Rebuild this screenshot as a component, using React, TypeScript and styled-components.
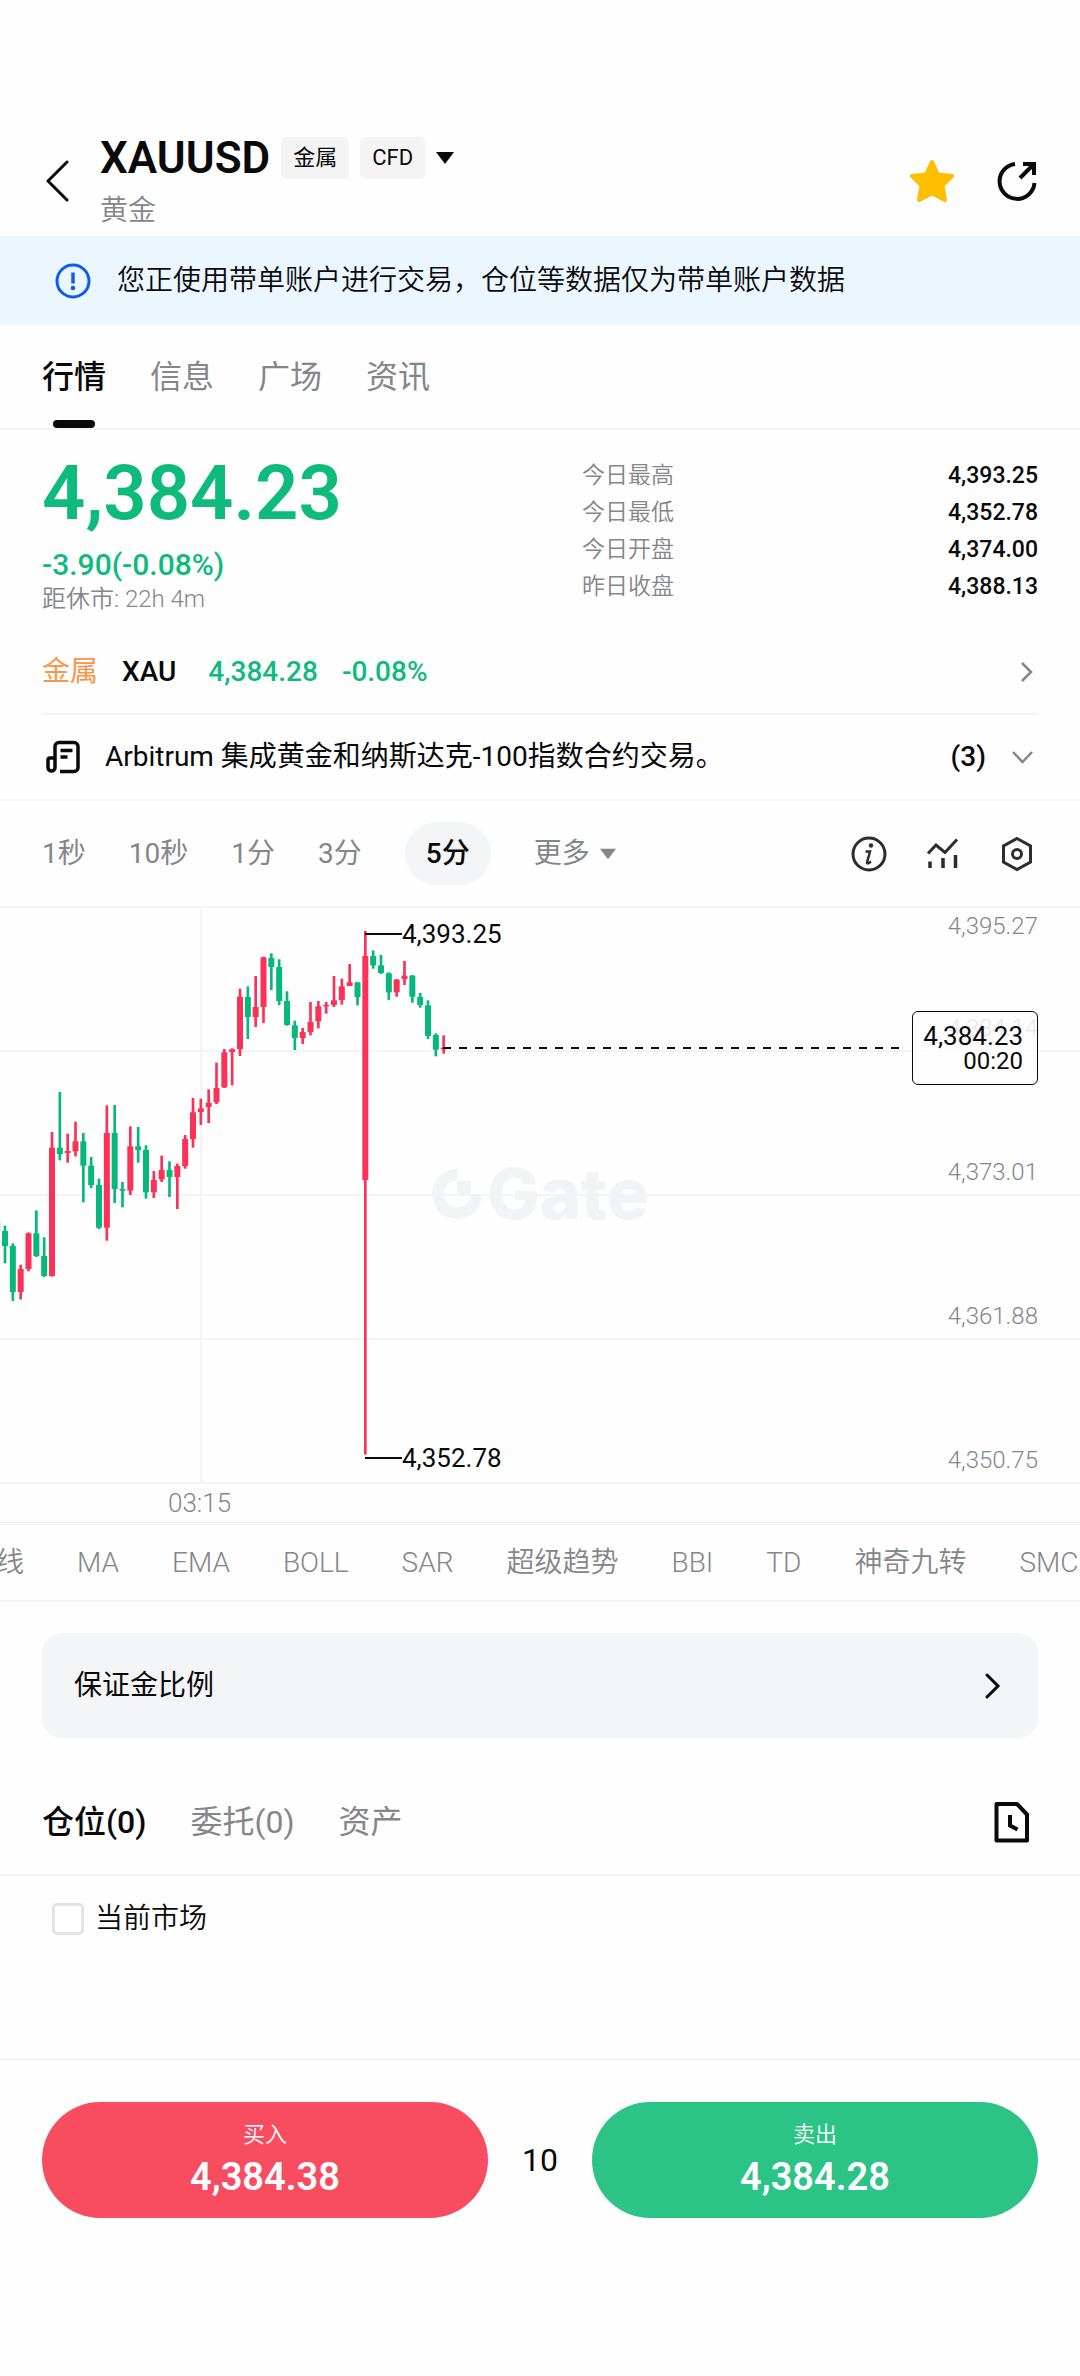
import React, { useState } from "react";
import styled, { createGlobalStyle } from "styled-components";

const color = {
  text: "#0a0a0b",
  muted: "#84868a",
  line: "#f3f4f5",
  fill: "#f4f5f7",
  up: "#0ebb7c",
  candleUp: "#fc3158",
  candleDown: "#06b87c",
};

const GlobalStyle = createGlobalStyle`
  * { box-sizing: border-box; }
  body {
    margin: 0;
    background: #fefefe;
    color: ${color.text};
    font-family: Roboto, "Noto Sans CJK SC", sans-serif;
    font-size: 28px;
    font-weight: 350;
    line-height: 40px;
  }
  button, input { font: inherit; color: inherit; }
  button {
    padding: 0;
    border: 0;
    background: none;
    cursor: pointer;
    white-space: nowrap;
  }
  svg { display: block; flex: none; }
`;

const Page = styled.div`
  display: flex;
  flex-direction: column;
  min-height: 100vh;
  overflow-x: hidden;
`;

/* ---------- header ---------- */

const Header = styled.header`
  display: flex;
  align-items: center;
  padding: 132px 42px 6px;
`;

const BackButton = styled.button`
  width: 58px;
`;

const Titles = styled.div`
  display: flex;
  flex: 1;
  flex-direction: column;
  gap: 8px;
`;

const TitleRow = styled.div`
  display: flex;
  align-items: center;
  gap: 11px;
  height: 52px;
`;

const Symbol = styled.h1`
  margin: 0;
  font-size: 44px;
  font-weight: 600;
  line-height: 52px;
`;

const Tag = styled.span`
  padding: 0 12px;
  border-radius: 5px;
  background: #f4f4f4;
  font-size: 22px;
  font-weight: 400;
  line-height: 42px;
`;

const Subtitle = styled.p`
  margin: 0;
  color: ${color.muted};
  line-height: 38px;
`;

const HeaderActions = styled.div`
  display: flex;
  gap: 42px;
`;

const Banner = styled.div`
  display: flex;
  align-items: center;
  gap: 23px;
  min-height: 89px;
  padding: 0 52px;
  background: #ecf6ff;
`;

/* ---------- tabs ---------- */

const TabBar = styled.nav<{ $height: number }>`
  display: flex;
  align-items: stretch;
  gap: 44px;
  height: ${(p) => p.$height}px;
  padding: 0 42px;
  border-bottom: 2px solid ${color.line};
`;

const Tab = styled.button<{ $active: boolean; $marked?: boolean }>`
  position: relative;
  color: ${(p) => (p.$active ? color.text : color.muted)};
  font-size: 32px;
  font-weight: ${(p) => (p.$active ? 500 : 400)};

  &::after {
    content: "";
    display: ${(p) => (p.$active && p.$marked ? "block" : "none")};
    position: absolute;
    bottom: 0;
    left: 50%;
    width: 42px;
    height: 8px;
    margin-left: -21px;
    border-radius: 4px;
    background: ${color.text};
  }
`;

const TabEnd = styled.div`
  display: flex;
  flex: 1;
  align-items: center;
  justify-content: flex-end;
`;

/* ---------- quote ---------- */

const Quote = styled.section`
  display: grid;
  grid-template-columns: 1fr 1fr;
  gap: 84px;
  padding: 27px 42px 18px;
`;

const Price = styled.div`
  color: ${color.up};
  font-size: 76px;
  font-weight: 600;
  line-height: 72px;
`;

const Change = styled.div`
  margin-top: 16px;
  color: ${color.up};
  font-size: 30px;
  font-weight: 500;
`;

const Countdown = styled.div`
  color: ${color.muted};
  font-size: 24px;
  line-height: 28px;
`;

const Stats = styled.dl`
  margin: 0;
`;

const Stat = styled.div`
  display: flex;
  justify-content: space-between;
  font-size: 23px;
  line-height: 37px;

  dt { color: ${color.muted}; }
  dd { margin: 0; font-weight: 500; }
`;

const Related = styled.a`
  display: flex;
  align-items: center;
  gap: 24px;
  height: 84px;
  margin: 0 42px;
  border-bottom: 2px solid ${color.line};
  color: ${color.text};
  text-decoration: none;
  font-weight: 500;
`;

const Category = styled.span`
  color: #f8964a;
  font-weight: 400;
`;

const RelatedQuote = styled.span`
  display: flex;
  flex: 1;
  gap: 24px;
  margin-left: 8px;
  color: ${color.up};
`;

const News = styled.button`
  display: flex;
  align-items: center;
  height: 86px;
  padding: 0 42px;
  border-bottom: 2px solid ${color.line};
  text-align: left;
`;

const NewsTitle = styled.span`
  flex: 1;
  overflow: hidden;
  margin-left: 21px;
  font-weight: 400;
  text-overflow: ellipsis;
`;

const NewsCount = styled.span`
  margin-right: 22px;
  font-weight: 500;
`;

/* ---------- chart ---------- */

const Intervals = styled.div`
  display: flex;
  align-items: center;
  gap: 43px;
  height: 105px;
  padding: 0 42px;
`;

const Interval = styled.button<{ $active?: boolean }>`
  display: flex;
  align-items: center;
  gap: 10px;
  height: 63px;
  padding: ${(p) => (p.$active ? "0 21px" : "0")};
  border-radius: 32px;
  background: ${(p) => (p.$active ? color.fill : "none")};
  color: ${(p) => (p.$active ? color.text : color.muted)};
  font-weight: ${(p) => (p.$active ? 500 : 400)};
`;

const ChartTools = styled.div`
  display: flex;
  flex: 1;
  justify-content: flex-end;
  gap: 32px;
`;

const Chart = styled.section`
  position: relative;
  height: 576px;
  overflow: hidden;
`;

const Band = styled.div`
  display: flex;
  flex-direction: column;
  justify-content: space-between;
  height: 144px;
  padding: 0 42px 4px;
  border-top: 2px solid ${color.line};
  color: ${color.muted};
  font-size: 24px;
  line-height: 36px;
  text-align: right;
`;

const TimeLine = styled.div`
  position: absolute;
  top: 0;
  left: 200px;
  width: 2px;
  height: 100%;
  background: ${color.line};
`;

const Watermark = styled.div`
  position: absolute;
  inset: 0;
  display: flex;
  align-items: center;
  justify-content: center;
  gap: 4px;
  color: #f2f3f4;
  font-family: Inter, sans-serif;
  font-size: 70px;
  font-weight: 800;
`;

const Plot = styled.svg`
  position: absolute;
  top: 0;
  left: 0;
`;

const Extreme = styled.div<{ $top: number }>`
  position: absolute;
  top: ${(p) => p.$top}px;
  left: 365px;
  display: flex;
  align-items: center;
  font-size: 26px;
  font-weight: 400;
  line-height: 32px;

  &::before {
    content: "";
    width: 37px;
    height: 2px;
    background: ${color.text};
  }
`;

const LastPrice = styled.div`
  position: absolute;
  top: 105px;
  right: 42px;
  left: 443px;
  display: flex;
  align-items: center;
  gap: 6px;
`;

const Dashes = styled.div`
  flex: 1;
  height: 2px;
  background: repeating-linear-gradient(to right, ${color.text} 0 8px, transparent 8px 16px);
`;

const PriceBox = styled.div`
  display: flex;
  flex-direction: column;
  justify-content: center;
  width: 126px;
  height: 74px;
  padding-right: 14px;
  border: 1px solid ${color.text};
  border-radius: 6px;
  background: rgba(254, 254, 254, 0.8);
  font-size: 26px;
  font-weight: 400;
  line-height: 26px;
  text-align: right;

  small { font-size: 24px; line-height: 24px; }
`;

const TimeAxis = styled.div`
  display: flex;
  height: 43px;
  padding-left: 168px;
  border-top: 2px solid ${color.line};
  border-bottom: 3px double #eceeef;
  color: ${color.muted};
  font-size: 26px;
  line-height: 38px;
`;

const Indicators = styled.div`
  display: flex;
  align-items: center;
  gap: 53px;
  height: 77px;
  overflow: hidden;
  border-bottom: 2px solid ${color.line};
  color: ${color.muted};

  button:first-child { margin-left: -4px; }
`;

/* ---------- account ---------- */

const MarginCard = styled.button`
  display: flex;
  align-items: center;
  justify-content: space-between;
  height: 105px;
  margin: 31px 42px;
  padding: 0 32px;
  border-radius: 20px;
  background: ${color.fill};
  font-weight: 400;
`;

const Positions = styled.section`
  flex: 1;
  padding: 23px 52px;
`;

const MarketFilter = styled.label`
  display: inline-flex;
  align-items: center;
  gap: 11px;

  input {
    width: 32px;
    height: 32px;
    margin: 0;
    border: 3px solid #e4e4e4;
    border-radius: 5px;
    background: #fff;
    appearance: none;
  }
  input:checked { background: ${color.text}; }
`;

const TradeBar = styled.footer`
  display: flex;
  align-items: center;
  padding: 42px 42px 158px;
  border-top: 1px solid #eceeef;
`;

const TradeButton = styled.button<{ $tone: string }>`
  flex: 1;
  height: 116px;
  border-radius: 58px;
  background: ${(p) => p.$tone};
  color: #fff;
`;

const TradeLabel = styled.span`
  display: block;
  font-size: 22px;
  line-height: 34px;
`;

const TradePrice = styled.strong`
  display: block;
  font-size: 38px;
  font-weight: 600;
  line-height: 50px;
`;

const Lots = styled.input`
  width: 104px;
  padding: 0;
  border: 0;
  background: none;
  font-size: 32px;
  font-weight: 400;
  text-align: center;
`;

/* ---------- data ---------- */

const stats = [
  ["今日最高", "4,393.25"],
  ["今日最低", "4,352.78"],
  ["今日开盘", "4,374.00"],
  ["昨日收盘", "4,388.13"],
];

const bands = [
  ["4,395.27", "4,384.14"],
  ["", "4,373.01"],
  ["", "4,361.88"],
  ["", "4,350.75"],
];

const indicators = ["线", "MA", "EMA", "BOLL", "SAR", "超级趋势", "BBI", "TD", "神奇九转", "SMC"];

type Candle = ["r" | "g", number, number, number, number];

// direction, high, body top, body bottom, low
const candles: Candle[] = [
  ["g", 963, 963, 992, 992],
  ["g", 977, 993, 1038, 1090], ["g", 1030, 1038, 1176, 1203], ["r", 1094, 1107, 1176, 1198],
  ["r", 997, 1000, 1107, 1114], ["g", 931, 1000, 1068, 1071], ["g", 1012, 1068, 1128, 1131],
  ["r", 696, 743, 1128, 1130], ["g", 576, 743, 762, 781], ["r", 701, 753, 759, 788],
  ["r", 665, 724, 754, 769], ["g", 699, 724, 797, 907], ["g", 771, 797, 855, 864],
  ["g", 836, 855, 983, 987], ["r", 616, 699, 983, 1022], ["g", 615, 699, 867, 909],
  ["g", 846, 867, 872, 922], ["r", 679, 739, 872, 885], ["g", 681, 739, 750, 788],
  ["g", 736, 750, 877, 896], ["r", 813, 840, 877, 894], ["r", 767, 810, 838, 846],
  ["g", 784, 810, 831, 891], ["r", 791, 798, 831, 927], ["r", 705, 717, 798, 806],
  ["r", 594, 637, 717, 743], ["r", 596, 625, 636, 675], ["r", 568, 608, 621, 669],
  ["r", 488, 564, 607, 612], ["r", 447, 457, 562, 564], ["r", 445, 448, 456, 556],
  ["r", 266, 290, 447, 468], ["g", 259, 291, 351, 417], ["r", 228, 321, 351, 381],
  ["r", 170, 172, 321, 369], ["g", 160, 174, 201, 270], ["g", 178, 201, 303, 315],
  ["g", 274, 303, 375, 377], ["g", 362, 376, 414, 450], ["r", 384, 396, 414, 432],
  ["r", 306, 366, 396, 406], ["r", 303, 319, 364, 385], ["r", 306, 315, 319, 341],
  ["r", 228, 301, 315, 321], ["r", 236, 259, 300, 314], ["r", 192, 247, 258, 258],
  ["g", 246, 247, 291, 316], ["r", 93, 168, 840, 1664], ["g", 151, 168, 196, 206],
  ["g", 165, 196, 219, 222], ["g", 217, 220, 277, 300], ["r", 237, 239, 277, 290],
  ["r", 183, 227, 237, 255], ["g", 225, 227, 290, 308], ["g", 279, 291, 315, 323],
  ["g", 301, 316, 408, 417], ["g", 400, 405, 449, 469], ["r", 406, 443, 448, 461],
];

/* ---------- icons ---------- */

const Icon = ({ size = 42, children, ...rest }: React.SVGProps<SVGSVGElement> & { size?: number }) => (
  <svg width={size} height={size} viewBox={`0 0 ${size} ${size}`} fill="none" stroke="currentColor" aria-hidden="true" {...rest}>
    {children}
  </svg>
);

const BackIcon = () => (
  <Icon strokeWidth="3">
    <path d="M25 2 6 21l19 19" strokeLinecap="round" strokeLinejoin="round" />
  </Icon>
);

const StarIcon = () => (
  <Icon size={44} fill="#fdbf00" stroke="#fdbf00" strokeWidth="4" strokeLinejoin="round">
    <path d="M22 3 28 15.500 42 17 32.500 26.500 35 41 22 34.500 9 41 11.500 26.500 2 17 16 15.500Z" />
  </Icon>
);

const ShareIcon = () => (
  <Icon strokeWidth="4">
    <path d="M19 4A17.500 17.500 0 1 0 38.500 23" />
    <path d="M24 18 37 5M27 4h11v11" />
  </Icon>
);

const AlertIcon = () => (
  <Icon stroke="#0f5bef" strokeWidth="3">
    <circle cx="21" cy="21" r="16" />
    <path d="M21 12.500v11" strokeWidth="3.500" />
    <circle cx="21" cy="28" r="2.300" fill="#0f5bef" stroke="none" />
  </Icon>
);

const Caret = ({ width }: { width: number }) => (
  <svg width={width} height="12" viewBox="0 0 18 12" fill="currentColor" aria-hidden="true">
    <path d="M0 0h18L9 12Z" />
  </svg>
);

const ChevronRight = ({ strong }: { strong?: boolean }) =>
  strong ? (
    <Icon size={18} strokeWidth="3" overflow="visible">
      <path d="M-1-2 10 9-1 20" strokeLinecap="round" />
    </Icon>
  ) : (
    <Icon size={20} strokeWidth="2.500" color={color.muted}>
      <path d="M4 1l9 9-9 9" />
    </Icon>
  );

const ChevronDown = () => (
  <Icon size={30} strokeWidth="2.500" color={color.muted}>
    <path d="M5 10l9.500 10L24 10" />
  </Icon>
);

const NewsIcon = () => (
  <Icon strokeWidth="3.500">
    <path d="M18 35.500h14a4 4 0 0 0 4-4v-21a4 4 0 0 0-4-4H17a4 4 0 0 0-4 4v21a3.500 3.500 0 0 1-7 0V24a2 2 0 0 1 2-2h5" strokeLinejoin="round" />
    <path d="M18.500 14.500h12M18.500 21h7" />
  </Icon>
);

const InfoIcon = () => (
  <Icon stroke="#2c2d2f" strokeWidth="3">
    <circle cx="21" cy="21" r="16" />
    <path d="M17.500 18.500h4.500l-3 11q0 1.500 2 0.500l2-1.500" strokeWidth="2.500" />
    <circle cx="23" cy="12.500" r="2.200" fill="#2c2d2f" stroke="none" />
  </Icon>
);

const TrendIcon = () => (
  <Icon stroke="#2c2d2f" strokeWidth="3">
    <path d="M6 20.500 14 12l9 7.500L35 6.500" />
    <path d="M8 28.500V35M21 25v10M33.500 22v13" strokeWidth="3.500" />
  </Icon>
);

const SettingsIcon = () => (
  <Icon stroke="#2c2d2f" strokeWidth="3">
    <path d="M21 5.500 34.500 13v16L21 36.500 7.500 29V13Z" />
    <circle cx="21" cy="21" r="4.500" />
  </Icon>
);

const HistoryIcon = () => (
  <Icon size={52} strokeWidth="4">
    <path d="M10.500 8H31l10 10.500V44.500H10.500Z" strokeLinejoin="round" />
    <path d="M24 19v10.500l7.500 4" />
  </Icon>
);

const GateMark = () => (
  <svg width="52" height="52" viewBox="0 0 52 52" fill="currentColor" aria-hidden="true">
    <path d="M26 1a25 25 0 1 0 25 25H39.500A13.500 13.500 0 1 1 26 12.500Z" />
    <path d="M26 12.500h13.500V26H26Z" />
  </svg>
);

/* ---------- screen ---------- */

const CandlePlot = () => (
  <Plot width="450" height="576" viewBox="0 18 1350 1728" aria-label="XAUUSD">
    {candles.map(([dir, high, top, bottom, low], i) => {
      const x = (i - 1) * 23.5 + 15;
      return (
        <g key={i} fill={dir === "r" ? color.candleUp : color.candleDown}>
          <rect x={x - 4} y={high} width="8" height={low - high} />
          <rect x={x - 9} y={top} width="18" height={bottom - top} />
        </g>
      );
    })}
  </Plot>
);

export default function App() {
  const [section, setSection] = useState("行情");
  const [account, setAccount] = useState("仓位(0)");
  const [lots, setLots] = useState("10");

  return (
    <Page>
      <GlobalStyle />

      <Header>
        <BackButton aria-label="返回"><BackIcon /></BackButton>
        <Titles>
          <TitleRow>
            <Symbol>XAUUSD</Symbol>
            <Tag>金属</Tag>
            <Tag>CFD</Tag>
            <Caret width={18} />
          </TitleRow>
          <Subtitle>黄金</Subtitle>
        </Titles>
        <HeaderActions>
          <button aria-label="收藏"><StarIcon /></button>
          <button aria-label="分享"><ShareIcon /></button>
        </HeaderActions>
      </Header>

      <Banner>
        <AlertIcon />
        您正使用带单账户进行交易，仓位等数据仅为带单账户数据
      </Banner>

      <TabBar $height={105}>
        {["行情", "信息", "广场", "资讯"].map((name) => (
          <Tab key={name} $active={section === name} $marked onClick={() => setSection(name)}>{name}</Tab>
        ))}
      </TabBar>

      <Quote>
        <div>
          <Price>4,384.23</Price>
          <Change>-3.90(-0.08%)</Change>
          <Countdown>距休市: 22h 4m</Countdown>
        </div>
        <Stats>
          {stats.map(([label, value]) => (
            <Stat key={label}>
              <dt>{label}</dt>
              <dd>{value}</dd>
            </Stat>
          ))}
        </Stats>
      </Quote>

      <Related href="#xau">
        <Category>金属</Category>
        <span>XAU</span>
        <RelatedQuote>
          <span>4,384.28</span>
          <span>-0.08%</span>
        </RelatedQuote>
        <ChevronRight />
      </Related>

      <News>
        <NewsIcon />
        <NewsTitle>Arbitrum 集成黄金和纳斯达克-100指数合约交易。</NewsTitle>
        <NewsCount>(3)</NewsCount>
        <ChevronDown />
      </News>

      <Intervals>
        <Interval>1秒</Interval>
        <Interval>10秒</Interval>
        <Interval>1分</Interval>
        <Interval>3分</Interval>
        <Interval $active>5分</Interval>
        <Interval>更多<Caret width={16} /></Interval>
        <ChartTools>
          <button aria-label="说明"><InfoIcon /></button>
          <button aria-label="指标"><TrendIcon /></button>
          <button aria-label="设置"><SettingsIcon /></button>
        </ChartTools>
      </Intervals>

      <Chart>
        <TimeLine />
        {bands.map(([top, bottom]) => (
          <Band key={bottom}>
            <span>{top}</span>
            <span>{bottom}</span>
          </Band>
        ))}
        <Watermark><GateMark />Gate</Watermark>
        <CandlePlot />
        <Extreme $top={12}>4,393.25</Extreme>
        <Extreme $top={536}>4,352.78</Extreme>
        <LastPrice>
          <Dashes />
          <PriceBox>
            4,384.23
            <small>00:20</small>
          </PriceBox>
        </LastPrice>
      </Chart>
      <TimeAxis>03:15</TimeAxis>

      <Indicators>
        {indicators.map((name) => <button key={name}>{name}</button>)}
      </Indicators>

      <MarginCard>
        保证金比例
        <ChevronRight strong />
      </MarginCard>

      <TabBar $height={107}>
        {["仓位(0)", "委托(0)", "资产"].map((name) => (
          <Tab key={name} $active={account === name} onClick={() => setAccount(name)}>{name}</Tab>
        ))}
        <TabEnd>
          <button aria-label="历史记录"><HistoryIcon /></button>
        </TabEnd>
      </TabBar>

      <Positions>
        <MarketFilter>
          <input type="checkbox" />
          当前市场
        </MarketFilter>
      </Positions>

      <TradeBar>
        <TradeButton $tone="#f84c60">
          <TradeLabel>买入</TradeLabel>
          <TradePrice>4,384.38</TradePrice>
        </TradeButton>
        <Lots aria-label="手数" value={lots} onChange={(e) => setLots(e.target.value)} />
        <TradeButton $tone="#2cc387">
          <TradeLabel>卖出</TradeLabel>
          <TradePrice>4,384.28</TradePrice>
        </TradeButton>
      </TradeBar>
    </Page>
  );
}
